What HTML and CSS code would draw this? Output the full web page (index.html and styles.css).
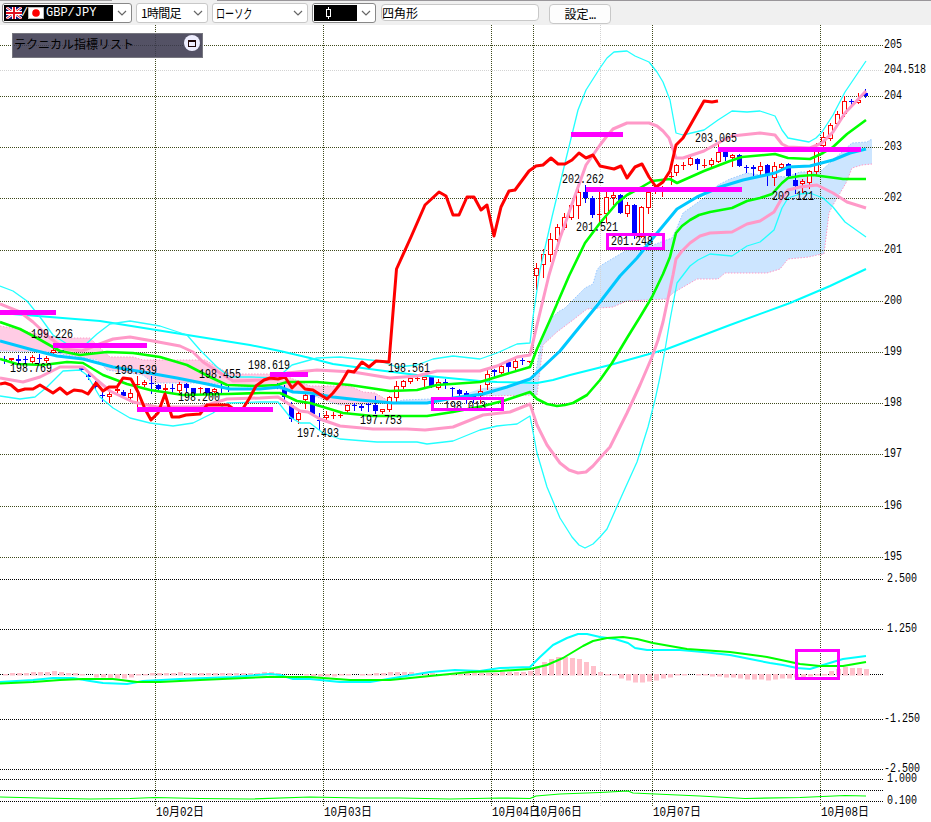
FILE: index.html
```html
<!DOCTYPE html>
<html lang="ja">
  <head>
    <meta charset="UTF-8">
    <title>GBP/JPY 1時間足</title>
    <link rel="stylesheet" href="styles.css">
  </head>
  <body>
    <div class="toolbar">
      <div class="combo combo-pair">
        <div class="pair">
          <svg class="flag" width="16" height="12" viewBox="0 0 16 12">
            <rect width="16" height="12" fill="#15157c" />
            <path d="M0 0L16 12M16 0L0 12" stroke="#fff" stroke-width="2.6" />
            <path d="M0 0L16 12M16 0L0 12" stroke="#e02030" stroke-width="1" />
            <path d="M8 0V12M0 6H16" stroke="#fff" stroke-width="4" />
            <path d="M8 0V12M0 6H16" stroke="#e01020" stroke-width="2" />
          </svg>
          <span class="slash">/</span>
          <svg class="flag" width="16" height="12" viewBox="0 0 16 12">
            <rect x=".5" y=".5" width="15" height="11" fill="#fff" stroke="#bbb" />
            <circle cx="8" cy="6" r="3.8" fill="#f00" />
          </svg>
          <span class="pair-name">GBP/JPY</span>
        </div>
        <svg class="arrow" width="10" height="6" viewBox="0 0 10 6"><path d="M1 1L5 5L9 1" /></svg>
      </div>
      <div class="combo combo-time">
        <span class="period">1時間足</span>
        <svg class="arrow" width="10" height="6" viewBox="0 0 10 6"><path d="M1 1L5 5L9 1" /></svg>
      </div>
      <div class="combo combo-type">
        <span class="narrow">ローソク</span>
        <svg class="arrow" width="10" height="6" viewBox="0 0 10 6"><path d="M1 1L5 5L9 1" /></svg>
      </div>
      <div class="combo combo-candle">
        <div class="swatch">
          <svg width="6" height="12" viewBox="0 0 6 12"><path d="M2.5 0V3M2.5 9V12M.5 2.500H4.500V9.500H.5Z" /></svg>
        </div>
        <svg class="arrow" width="10" height="6" viewBox="0 0 10 6"><path d="M1 1L5 5L9 1" /></svg>
      </div>
      <div class="field">四角形</div>
      <div class="btn">設定<span class="dots">...</span></div>
    </div>

    <div class="chart">
      <svg class="plot" width="931" height="797" viewBox="0 25 931 797">
        <!-- ichimoku clouds -->
        <polygon class="cloud-pink" points="0,326 17,329 40,335 67,338 90,338 100,348 110,357 133,357 143,360 205,360 217,367 230,374 267,374 283,375 298,381 310,386 350,386 363,392 375,393 387,400 393,403 340,405 327,401 317,397 280,389 260,388 207,383 153,383 143,375 107,370 97,360 67,355 50,352 0,351" />
        <polygon class="cloud-blue" points="393,403 403,400 430,399 455,397 483,388 507,386 535,377 542,337 550,320 558,312 565,308 585,288 593,284 597,270 600,266 627,250 653,245 672,238 676,230 683,213 704,198 718,185 730,179 747,173 760,175 787,177 800,172 820,172 833,160 843,151 852,143 867,142 872,139 872,164 862,165 852,168 846,183 833,205 829,213 824,254 817,255 809,257 788,259 780,269 767,273 725,273 718,279 697,279 673,293 667,299 627,301 613,307 587,309 573,320 557,332 543,345 537,395 529,395 483,396 455,398 430,402" />
        <polyline class="span-pink" points="0,326 17,329 40,335 67,338 90,338 100,348 110,357 133,357 143,360 205,360 217,367 230,374 267,374 283,375 298,381 310,386 350,386 363,392 375,393 387,400" />
        <polyline class="span-blue" points="0,351 50,352 67,355 97,360 107,370 143,375 153,383 207,383 260,388 280,389 317,397 327,401 340,405 393,403 403,400 430,399 483,396" />
        <polyline class="span-blue" points="535,377 542,337 550,320 558,312 565,308 585,288 593,284 597,270 600,266 627,250 653,245 672,238 676,230 683,213 704,198 718,185 730,179 747,173 760,175 787,177 800,172 820,172 833,160 843,151 852,143 867,142 872,139" />
        <polyline class="span-pink" points="483,396 537,395 543,345 557,332 573,320 587,309 613,307 627,301 667,299 673,293 697,279 718,279 725,273 767,273 780,269 788,259 809,257 817,255 824,254 829,213 833,205 846,183 852,168 862,165 872,164" />

        <g id="grid"></g>
        <g id="candles"></g>

        <!-- long moving average -->
        <polyline class="line cyan ma" points="0,313 50,317 100,321 150,329 200,337 250,345 280,351 310,358 333,364 377,370 417,375 480,381 497,382 537,383 553,380 570,375 610,365 667,349 730,325 790,303 830,286 866,269" />

        <!-- bollinger bands, outer to inner -->
        <polyline class="line cyan" points="0,286 13,291 27,301 40,317 53,335 67,344 85,345 97,334 110,324 130,321 160,326 187,335 200,350 217,367 230,377 250,377 277,378 292,365 317,358 340,357 380,361 397,367 417,365 433,359 453,356 480,359 497,353 517,344 530,343 533,317 540,270 552,217 565,163 578,110 586,90 600,68 607,58 614,52 627,51 635,56 649,62 657,72 663,82 670,100 676,133 683,135 704,130 718,120 732,111 747,112 760,111 775,116 782,130 788,138 809,142 816,138 822,132 833,115 845,92 866,61" />
        <polyline class="line cyan" points="0,396 20,399 35,397 47,387 63,371 80,370 87,375 100,397 113,408 130,418 150,423 173,426 193,423 213,413 227,403 260,402 278,402 290,417 300,423 310,423 323,433 340,439 377,442 417,442 427,444 453,441 480,430 497,426 517,424 530,416 537,453 547,487 560,518 572,537 579,545 585,548 593,544 600,537 607,529 623,493 637,462 648,427 655,400 660,377 665,350 670,320 677,283 690,266 698,260 710,254 732,256 747,246 760,242 774,230 782,208 788,198 800,194 810,193 823,198 833,207 845,222 866,237" />
        <polyline class="line pink" points="0,304 20,312 33,322 50,338 65,349 82,351 97,345 113,339 130,337 153,341 180,346 193,352 203,362 220,373 233,381 260,380 275,379 287,373 317,370 353,372 390,378 417,376 437,371 480,371 497,366 517,357 530,355 537,325 549,275 560,238 577,190 586,165 600,145 607,136 613,129 627,123 649,123 657,126 663,131 669,138 676,158 683,158 704,151 720,142 732,136 760,133 775,135 782,144 788,147 810,148 822,143 833,132 845,113 866,91" />
        <polyline class="line pink" points="0,378 23,382 40,377 60,367 83,367 97,380 110,391 133,402 157,407 200,407 227,399 260,398 278,397 300,411 308,412 320,419 340,426 373,429 407,429 425,430 453,427 483,415 510,412 530,404 537,425 547,445 560,463 569,470 578,473 586,472 593,466 600,458 610,447 627,413 640,385 652,357 658,340 663,322 673,275 676,259 682,251 690,243 700,236 710,233 732,232 747,224 760,221 774,212 782,198 788,190 800,187 817,185 833,193 847,202 866,208" />
        <polyline class="line green" points="0,322 20,329 37,338 60,351 80,355 107,352 133,353 160,357 187,365 210,377 227,385 257,386 277,385 287,382 317,382 350,385 390,391 417,390 437,385 480,382 503,375 530,367 537,349 550,320 569,276 585,243 600,223 617,203 627,195 640,188 652,181 670,179 677,183 704,171 730,161 742,157 775,154 788,158 810,159 823,153 833,147 847,134 866,120" />
        <polyline class="line green" points="0,359 17,364 43,365 67,362 83,363 103,375 127,384 150,390 183,395 227,394 260,393 280,393 297,401 310,403 343,413 373,416 427,416 453,412 483,406 503,401 530,392 537,399 547,404 557,406 565,405 573,403 587,395 600,380 612,363 627,338 640,317 652,297 663,274 670,257 676,233 682,226 690,220 699,215 710,212 732,208 747,201 760,198 772,194 782,183 788,178 800,176 813,175 843,179 866,179" />
        <polyline class="line blue" points="0,341 33,350 57,356 83,359 113,367 143,372 177,378 207,384 230,389 260,389 280,387 293,392 310,393 333,397 360,400 393,403 427,403 453,398 483,394 507,387 530,379 543,367 560,351 573,335 600,302 620,276 637,258 653,238 677,209 697,197 720,187 743,180 775,173 788,167 810,166 833,160 850,153 866,149" />

        <!-- lagging span -->
        <polyline class="line red" points="0,384 5,383 11,385 18,391 25,389 33,389 40,385 53,393 60,388 67,394 74,390 82,391 88,394 96,383 103,391 109,387 117,387 123,378 131,379 138,392 145,409 151,420 158,413 165,394 172,417 179,417 186,415 200,414 207,405 228,405 235,410 242,410 249,399 256,386 264,380 270,378 278,379 285,377 292,388 298,382 305,389 313,390 327,399 333,393 341,383 348,371 354,372 362,362 369,367 376,361 389,362 396.5,269 411,237 425,205 439,192 446,196 453,215 459,215 467,197 474,197 481,210 487,205 494,236 501,207 509,191 515,190 529,171 536,166 543,165 551,158 558,164 565,164 572,160 579,153 586,158 593,155 600,166 614,169 621,166 627,178 635,167 642,164 649,177 656,187 663,182 670,171 676,145 683,138 704,101 712,102 718,101" />

        <!-- macd and the lower oscillator -->
        <g id="macd"></g>
        <polyline class="line cyan osc" points="0,682 33,680 53,678 73,678 90,681 103,683 127,684 143,681 180,679 233,677 270,674 280,675 293,679 310,679 340,682 370,682 400,677 430,672 455,670 480,671 500,668 530,667 540,657 553,645 567,638 578,634 587,634 600,637 615,639 628,643 635,648 647,650 680,650 703,652 730,655 750,659 770,663 783,665 797,668 810,669 823,665 843,659 866,656" />
        <polyline class="line green osc" points="0,683.5 33,682 60,680 83,679 113,679 137,682 160,682 200,680 267,677 310,677 350,680 390,680 430,676 470,672 500,671 530,669 547,665 563,658 583,646 593,641 607,638 623,637 637,639 653,643 687,649 730,652 767,657 800,664 820,666 843,666 866,662" />
        <polyline class="line green thin" points="0,797 40,798 90,799 130,798.5 155,797.5 200,798.5 250,799 310,797 360,798 400,798 450,799 500,798 530,798.5 536,796 560,794 600,792.5 628,791 633,793 700,796 745,798.5 800,797.5 845,795.5 866,796" />

        <!-- price labels -->
        <g class="label" id="labels"></g>

        <!-- drawn marks -->
        <path class="mark" d="M0 312.500H56M53 345.500H147M137 409.500H273M270 374.500H308M571 134.500H623M586 189.500H742M718 149.500H861" />
        <rect class="box" x="432.500" y="398.500" width="70" height="11" />
        <rect class="box" x="607.500" y="234.500" width="56" height="14" />
        <rect class="box" x="796.500" y="650.500" width="42" height="28" />
      </svg>

      <div class="panel">
        <span>テクニカル指標リスト</span>
        <div class="panel-btn"></div>
      </div>
    </div>

    <script src="chart.js"></script>
  </body>
</html>
```
FILE: styles.css
```css
body {
  margin: 0;
  width: 931px;
  height: 822px;
  overflow: hidden;
  background-color: #fff;
  color: #000;
  font-family: "Liberation Mono", "Noto Sans CJK JP", monospace;
  font-size: 12px;
}

.toolbar {
  display: flex;
  align-items: flex-start;
  box-sizing: border-box;
  height: 25px;
  padding: 3px 0 0 2px;
  background: linear-gradient(to right, #a5a3a5 112px, #f0f0f0 112px, #f0f0f0 217px, #99969a 217px) 0 0 / 100% 1px no-repeat #f0f0f0;
}

.combo {
  display: flex;
  align-items: center;
  justify-content: space-between;
  box-sizing: border-box;
  height: 20px;
  padding: 0 4px;
  border: 1px solid #c8c8c8;
  border-radius: 3px;
  background-color: #fff;
  line-height: 18px;
  white-space: nowrap;
}

.combo-pair {
  width: 130px;
  padding-left: 1px;
  border-color: #888;
  margin-right: 4px;
}

.combo-time {
  width: 72px;
  margin-right: 4px;
}

.combo-type {
  width: 96px;
  padding-left: 3px;
  margin-right: 4px;
}

.combo-candle {
  width: 64px;
  padding-left: 1px;
  margin-right: 5px;
  border-color: #888;
}

.combo-time,
.combo-type,
.field,
.btn {
  font-family: "Noto Sans CJK JP", sans-serif;
}

.period {
  letter-spacing: -0.7px;
}

.pair {
  display: flex;
  align-items: center;
  box-sizing: border-box;
  width: 109px;
  height: 16px;
  padding-left: 2px;
  background-color: #000;
  color: #fff;
}

.flag {
  flex: none;
}

.slash {
  flex: none;
  width: 6px;
  text-indent: -1px;
}

.pair-name {
  margin-left: 2px;
}

.narrow {
  width: 36px;
  font-size: 13px;
  transform: scaleX(0.7);
  transform-origin: left;
}

.arrow {
  flex: none;
}

.arrow path {
  fill: none;
  stroke: #666;
  stroke-width: 1.2;
}

.swatch {
  display: flex;
  align-items: center;
  box-sizing: border-box;
  width: 43px;
  height: 16px;
  padding-left: 12px;
  background-color: #000;
}

.swatch path {
  fill: none;
  stroke: #fff;
  shape-rendering: crispEdges;
}

.field {
  box-sizing: border-box;
  width: 158px;
  height: 17px;
  margin: 1px 10px 0 0;
  padding-left: 0;
  border: 1px solid #c8c8c8;
  border-radius: 4px;
  background-color: #fff;
  line-height: 15px;
}

.btn {
  box-sizing: border-box;
  width: 62px;
  height: 20px;
  margin-top: 1px;
  border: 1px solid #c8c8c8;
  border-radius: 4px;
  background-color: #fdfdfd;
  line-height: 18px;
  text-align: center;
}

.dots {
  letter-spacing: -1px;
}

.chart {
  position: relative;
  height: 797px;
}

.plot {
  display: block;
}

/* indicator list, floats over the chart */
.panel {
  position: absolute;
  left: 12px;
  top: 8px;
  display: flex;
  justify-content: space-between;
  box-sizing: border-box;
  width: 191px;
  height: 25px;
  padding: 1px 2px 0 1px;
  border: 1px solid #77777f;
  background-color: rgba(60, 58, 80, 0.88);
  font-family: "Noto Sans CJK JP", sans-serif;
  line-height: 18px;
}

.panel-btn {
  box-sizing: border-box;
  width: 16px;
  height: 16px;
  border-radius: 8px;
  background-color: #eeeeff;
  padding: 5px 4px;
}

.panel-btn::before {
  content: "";
  display: block;
  box-sizing: border-box;
  width: 8px;
  height: 7px;
  border: 1px solid #200808;
  border-top-width: 2px;
}

/* grid */
.grid-line {
  stroke: #3f4a1c;
  stroke-dasharray: 1 1;
  shape-rendering: crispEdges;
}

.grid-line.now {
  stroke: #d3d3d3;
}

.grid-line.sub {
  stroke: #000;
}

/* series */
.line {
  fill: none;
  stroke-linejoin: round;
}

.cyan {
  stroke: #2ff;
  stroke-width: 1.3;
}

.cyan.ma {
  stroke: #0ff;
  stroke-width: 2;
}

.pink {
  stroke: #ff99c8;
  stroke-width: 3;
}

.green {
  stroke: #0f0;
  stroke-width: 2.6;
}

.blue {
  stroke: #00c8ff;
  stroke-width: 3;
}

.red {
  stroke: #f00;
  stroke-width: 3;
}

.line.osc {
  stroke-width: 2;
}

.cyan.osc {
  stroke: #0ff;
}

.line.thin {
  stroke-width: 1.2;
}

.cloud-pink {
  fill: #ffcce5;
}

.cloud-blue {
  fill: #cce5ff;
}

.span-pink,
.span-blue {
  fill: none;
  stroke: #ff99c8;
  stroke-dasharray: 1.5 1.5;
}

.span-blue {
  stroke: #99c8ff;
}

.up {
  stroke: #f00;
  fill: #fff;
  shape-rendering: crispEdges;
}

.down {
  stroke: #00f;
  fill: #00f;
  shape-rendering: crispEdges;
}

.bar {
  fill: #ffc0cb;
}

.label text {
  font-family: "Liberation Mono", "Noto Sans CJK JP", monospace;
  font-size: 12px;
}

.mark {
  stroke: #f0f;
  stroke-width: 5;
  shape-rendering: crispEdges;
}

.box {
  fill: none;
  stroke: #f0f;
  stroke-width: 3;
  shape-rendering: crispEdges;
}
```
FILE: chart.js
```js
const NS = "http://www.w3.org/2000/svg";

function add(parent, tag, attrs, text) {
  const el = document.createElementNS(NS, tag);
  for (const key in attrs) el.setAttribute(key, attrs[key]);
  if (text) el.textContent = text;
  document.getElementById(parent).appendChild(el);
}

function gridLine(x1, y1, x2, y2, cls) {
  add("grid", "line", { x1, y1, x2, y2, class: "grid-line " + cls });
}

// horizontal and vertical dotted lines
[45, 96, 147, 198, 250, 301, 352, 403, 454, 506, 557].forEach(y => gridLine(0, y + 0.5, 883, y + 0.5, ""));
gridLine(0, 70.5, 883, 70.5, "now");
[579, 629, 674, 719, 769, 779, 790, 801].forEach(y => gridLine(0, y + 0.5, 883, y + 0.5, "sub"));
[155, 323, 491, 533, 652, 820].forEach(x => gridLine(x + 0.5, 25, x + 0.5, 806, ""));
gridLine(600.5, 25, 600.5, 806, "now");

// x, high, body top, body bottom, low, 1 = up / 0 = down
const candles = [
  [4, 356, 359, 359, 363, 0], [11, 358, 358, 359, 361, 1], [18, 355, 359, 360, 363, 0], [25, 356, 359, 359, 363, 0],
  [32, 355, 357, 361, 363, 1], [39, 354, 358, 358, 362, 0], [46, 356, 358, 360, 362, 1], [53, 347, 350, 352, 353, 1],
  [61, 350, 350, 352, 352, 0], [81, 366, 368, 369, 371, 0], [88, 372, 375, 376, 379, 0], [95, 381, 384, 386, 388, 0],
  [102, 391, 395, 395, 401, 0], [109, 391, 394, 396, 402, 1], [117, 386, 389, 390, 392, 1], [123, 390, 392, 395, 397, 0],
  [130, 389, 393, 397, 399, 1], [137, 376, 384, 384, 408, 1], [144, 380, 382, 384, 386, 1], [151, 376, 383, 383, 393, 0],
  [158, 384, 385, 388, 389, 0], [165, 384, 388, 389, 392, 1], [172, 384, 388, 388, 393, 0], [179, 382, 384, 390, 392, 1],
  [186, 383, 384, 387, 391, 0], [193, 388, 388, 393, 393, 0], [200, 387, 388, 388, 394, 1], [207, 388, 388, 393, 394, 0],
  [214, 388, 389, 391, 394, 1], [221, 384, 387, 387, 392, 0], [228, 386, 388, 388, 391, 0], [277, 383, 385, 385, 388, 0],
  [284, 385, 388, 396, 402, 0], [291, 402, 405, 418, 421, 0], [298, 411, 413, 419, 423, 1], [305, 394, 395, 399, 408, 1],
  [312, 394, 395, 413, 415, 0], [319, 413, 420, 420, 430, 0], [326, 411, 415, 417, 420, 1], [333, 412, 415, 415, 418, 1],
  [340, 413, 415, 415, 417, 1], [347, 405, 405, 410, 412, 1], [354, 403, 405, 405, 410, 0], [361, 404, 406, 407, 410, 0],
  [368, 403, 404, 404, 411, 0], [375, 396, 405, 410, 413, 0], [382, 409, 409, 411, 413, 1], [389, 396, 397, 409, 411, 1],
  [396, 381, 386, 397, 401, 1], [403, 380, 381, 386, 388, 1], [410, 375, 378, 381, 383, 1], [417, 376, 378, 378, 380, 1],
  [424, 377, 377, 379, 388, 1], [431, 377, 377, 385, 387, 0], [438, 379, 382, 387, 389, 1], [445, 379, 382, 384, 388, 0],
  [452, 387, 388, 388, 397, 0], [459, 389, 390, 393, 396, 0], [466, 391, 393, 394, 403, 0], [473, 394, 396, 398, 402, 0],
  [480, 385, 391, 395, 403, 1], [487, 370, 374, 384, 389, 1], [494, 369, 370, 371, 376, 0], [501, 364, 366, 372, 373, 1],
  [508, 361, 362, 366, 372, 0], [515, 358, 361, 367, 369, 1], [522, 358, 360, 360, 364, 0], [529, 361, 361, 361, 362, 1],
  [536, 263, 268, 275, 289, 1], [543, 249, 254, 264, 277, 1], [550, 233, 239, 254, 261, 1], [557, 224, 227, 239, 241, 1],
  [564, 213, 217, 227, 229, 1], [571, 204, 205, 217, 219, 1], [578, 189, 192, 205, 218, 1], [585, 185, 192, 197, 202, 0],
  [592, 196, 198, 214, 217, 0], [599, 192, 214, 214, 223, 1], [606, 192, 197, 213, 222, 1], [613, 192, 195, 197, 204, 1],
  [620, 194, 195, 212, 213, 0], [627, 202, 205, 213, 216, 1], [634, 204, 205, 233, 238, 0], [641, 206, 207, 236, 237, 1],
  [648, 190, 192, 207, 213, 1], [655, 187, 189, 190, 193, 1], [662, 186, 188, 189, 196, 1], [671, 172, 176, 176, 184, 1],
  [676, 164, 165, 172, 175, 1], [683, 162, 165, 165, 169, 1], [690, 157, 158, 164, 165, 1], [697, 158, 159, 163, 169, 0],
  [704, 159, 165, 165, 167, 1], [711, 158, 160, 164, 166, 1], [718, 144, 152, 161, 162, 1], [725, 149, 152, 156, 160, 0],
  [732, 154, 155, 157, 166, 1], [739, 154, 155, 165, 166, 0], [746, 165, 167, 167, 172, 0], [753, 165, 167, 168, 175, 0],
  [760, 162, 166, 170, 174, 1], [767, 164, 165, 173, 185, 0], [774, 162, 166, 177, 185, 1], [781, 163, 164, 167, 168, 1],
  [788, 163, 164, 175, 177, 0], [795, 173, 180, 185, 193, 0], [802, 179, 181, 183, 192, 1], [809, 170, 171, 182, 188, 1],
  [816, 143, 150, 171, 174, 1], [823, 132, 137, 145, 148, 1], [830, 123, 125, 138, 140, 1], [837, 111, 114, 123, 125, 1],
  [844, 96, 101, 113, 116, 1], [851, 99, 101, 101, 104, 0], [858, 93, 100, 102, 103, 1], [865, 89, 93, 95, 97, 0]
];

candles.forEach(([x, high, top, bottom, low, up]) => {
  const cls = up ? "up" : "down";
  const cx = x + 0.5;
  add("candles", "line", { x1: cx, y1: high, x2: cx, y2: low + 1, class: cls });
  if (top === bottom) {
    add("candles", "line", { x1: x - 2, y1: top + 0.5, x2: x + 3, y2: top + 0.5, class: cls });
  } else {
    add("candles", "rect", { x: cx - 2, y: top + 0.5, width: 4, height: bottom - top, class: cls });
  }
});

// macd histogram, one bar per candle
const histogram = [
  1, 2, 2, 2, 3, 3, 3, 4, 3, 2, 2, 1, 0, -3, -3, -4, -4, -4, -3, -1, 1, 2, 2, 2, 2, 3, 2, 2, 2, 2, 2, 2,
  2, 2, 2, 2, 2, 3, 3, 2, 0, 0, 0, -1, -2, -2, -2, -2, -1, -1, 0, 1, 1, 2, 2, 3, 3, 3, 3, 2, 2, 2, 1, 1,
  1, 1, 2, 2, 2, 2, 2, 3, 3, 3, 3, 4, 9, 13, 16, 18, 18, 17, 16, 13, 9, 3, 1, -1, -4, -6, -8, -8, -7, -6,
  -4, -3, -1, -1, 0, -1, -1, -2, -2, -3, -3, -4, -5, -5, -5, -6, -5, -4, -4, -3, -3, -2, -1, 1, 4, 6, 8, 7, 7, 6
];

histogram.forEach((v, i) => {
  if (v === 0) return;
  add("macd", "rect", { x: 3 + i * 7, y: v > 0 ? 675 - v : 674, width: 5, height: Math.abs(v) + 0.5, class: "bar" });
});

// x, baseline, text
const labels = [
  [31, 338, "199.226"], [10, 372, "198.769"], [115, 374, "198.539"], [199, 378, "198.455"], [178, 401, "198.200"],
  [248, 369, "198.619"], [297, 437, "197.493"], [360, 424, "197.753"], [388, 372, "198.561"], [444, 410, "198.013"],
  [562, 183, "202.262"], [576, 231, "201.521"], [611, 245, "201.248"], [695, 142, "203.065"], [772, 200, "202.121"],
  [884, 48, "205"], [884, 73, "204.518"], [884, 99, "204"], [884, 150, "203"], [884, 201, "202"], [884, 253, "201"],
  [884, 304, "200"], [884, 355, "199"], [884, 406, "198"], [884, 457, "197"], [884, 509, "196"], [884, 560, "195"],
  [887, 582, "2.500"], [887, 632, "1.250"], [884, 722, "-1.250"], [884, 772, "-2.500"], [887, 782, "1.000"], [887, 804, "0.100"],
  [156, 816, "10月02日"], [324, 816, "10月03日"], [492, 816, "10月04日"], [534, 816, "10月06日"], [653, 816, "10月07日"],
  [821, 816, "10月08日"]
];

labels.forEach(([x, y, text]) => {
  // half-width characters are 6px, kanji 12px
  const width = [...text].reduce((sum, c) => sum + (c > "\u00ff" ? 12 : 6), 0);
  add("labels", "text", { x, y, textLength: width, lengthAdjust: "spacingAndGlyphs" }, text);
});
```
